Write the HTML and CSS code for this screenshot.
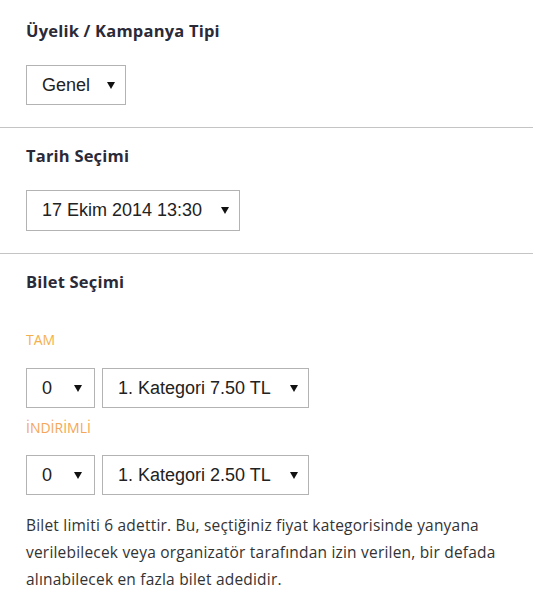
FILE: index.html
```html
<!DOCTYPE html>
<html lang="tr">

<head>
    <meta charset="UTF-8">
    <meta name="viewport" content="width=device-width, initial-scale=1.0">
    <title>Bilet Seçimi</title>
    <link rel="stylesheet" href="styles.css">
</head>

<body>
    <div class="section section-first">
        <h2 class="title">Üyelik / Kampanya Tipi</h2>
        <div class="select select-genel">
            <span>Genel</span>
            <svg class="arrow" width="8" height="7" viewBox="0 0 8 7"><path d="M0 0H8L4 7Z" /></svg>
        </div>
    </div>
    <div class="section">
        <h2 class="title">Tarih Seçimi</h2>
        <div class="select select-date">
            <span>17 Ekim 2014 13:30</span>
            <svg class="arrow" width="8" height="7" viewBox="0 0 8 7"><path d="M0 0H8L4 7Z" /></svg>
        </div>
    </div>
    <div class="section section-last">
        <h2 class="title">Bilet Seçimi</h2>

        <div class="ticket-label label-tam">TAM</div>
        <div class="ticket-row">
            <div class="select select-count">
                <span>0</span>
                <svg class="arrow" width="8" height="7" viewBox="0 0 8 7"><path d="M0 0H8L4 7Z" /></svg>
            </div>
            <div class="select select-category">
                <span>1. Kategori 7.50 TL</span>
                <svg class="arrow" width="8" height="7" viewBox="0 0 8 7"><path d="M0 0H8L4 7Z" /></svg>
            </div>
        </div>

        <div class="ticket-label label-indirimli">İNDİRİMLİ</div>
        <div class="ticket-row">
            <div class="select select-count">
                <span>0</span>
                <svg class="arrow" width="8" height="7" viewBox="0 0 8 7"><path d="M0 0H8L4 7Z" /></svg>
            </div>
            <div class="select select-category">
                <span>1. Kategori 2.50 TL</span>
                <svg class="arrow" width="8" height="7" viewBox="0 0 8 7"><path d="M0 0H8L4 7Z" /></svg>
            </div>
        </div>

        <p class="info">Bilet limiti 6 adettir. Bu, seçtiğiniz fiyat kategorisinde yanyana verilebilecek veya organizatör tarafından izin verilen, bir defada alınabilecek en fazla bilet adedidir.</p>
    </div>
</body>

</html>
```

FILE: styles.css
```css
* {
    margin: 0;
    padding: 0;
    box-sizing: border-box;
}
body {
    background-color: #fff;
    font-family: "Open Sans", "Noto Sans", sans-serif;
    color: #2b2b36;
}
.section {
    padding: 18px 26px 22px 26px;
    border-bottom: 1px solid #c4c4c4;
}
.section-first {
    padding-top: 21px;
}
.section-last {
    border-bottom: none;
}
.title {
    font-size: 16.5px;
    font-weight: 700;
    line-height: 20px;
    letter-spacing: 0.2px;
    color: #2a2a38;
    margin-bottom: 24px;
}
.select {
    display: flex;
    align-items: center;
    justify-content: space-between;
    height: 40px;
    padding: 0 10px 0 15px;
    border: 1px solid #b3b3b3;
    background-color: #fff;
    font-family: "Liberation Sans", Arial, sans-serif;
    font-size: 18px;
    color: #222;
}
.select .arrow {
    fill: #111;
    flex-shrink: 0;
}
.select-genel {
    width: 100px;
}
.select-date {
    width: 214px;
    height: 41px;
}
.ticket-label {
    font-size: 14px;
    line-height: 16px;
    font-weight: 400;
    letter-spacing: 0;
    margin-bottom: 20px;
}
.label-tam {
    margin-top: 40px;
    color: #f4b04c;
}
.label-indirimli {
    margin-top: 12px;
    margin-bottom: 19px;
    color: #f5a658;
}
.ticket-row {
    display: flex;
    gap: 7px;
}
.select-count {
    width: 69px;
    padding-right: 12px;
}
.select-category {
    width: 207px;
}
.info {
    margin-top: 17px;
    font-size: 15.5px;
    line-height: 27px;
    letter-spacing: 0.2px;
    color: #333;
    padding-right: 4px;
}
```
